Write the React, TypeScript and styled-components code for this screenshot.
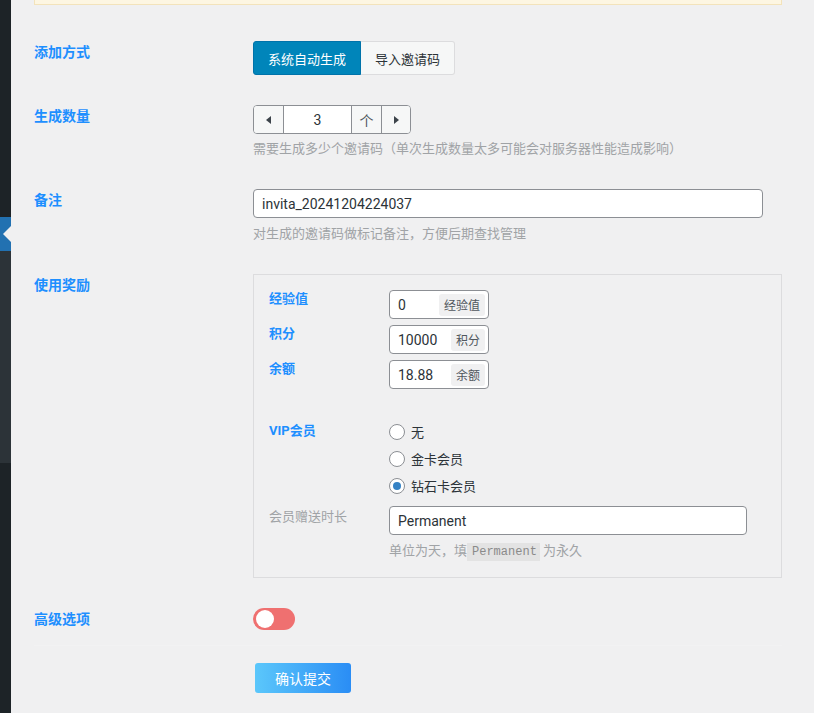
import React from "react";
import styled, { createGlobalStyle } from "styled-components";

const GlobalStyle = createGlobalStyle`
  html, body {
    margin: 0;
    padding: 0;
    background: #f0f0f1;
  }
  body {
    font-family: Roboto, "Noto Sans CJK SC", sans-serif;
    font-size: 13px;
    color: #3c434a;
  }
  * {
    box-sizing: border-box;
  }
`;

const Shell = styled.div`
  display: flex;
  min-height: 100vh;
`;

const Sidebar = styled.div`
  width: 11px;
  flex: none;
  display: flex;
  flex-direction: column;
`;

const MenuSeg = styled.div<{ $color: string; $h?: number; $current?: boolean }>`
  background: ${(p) => p.$color};
  height: ${(p) => (p.$h ? `${p.$h}px` : "auto")};
  flex: ${(p) => (p.$h ? "none" : "1")};
  position: relative;
  ${(p) =>
    p.$current &&
    `
    &::after {
      content: "";
      position: absolute;
      right: 0;
      top: 50%;
      margin-top: -8px;
      border: 8px solid transparent;
      border-right-color: #f0f0f1;
    }
  `}
`;

const Main = styled.div`
  flex: 1;
  padding: 0 32px 0 23px;
`;

const Notice = styled.div`
  height: 5px;
  background: #fdf6e2;
  border: 1px solid #f3e3bb;
  border-top: none;
`;

const FormTable = styled.div`
  margin-top: 21px;
`;

const Row = styled.div<{ $last?: boolean }>`
  display: grid;
  grid-template-columns: 219px 1fr;
  align-items: start;
  padding: 15px 0;
  border-bottom: ${(p) => (p.$last ? "1px solid #f2f2f3" : "none")};
`;

const Label = styled.div`
  margin-top: 1px;
  line-height: 20px;
  font-size: 14px;
  font-weight: 700;
  color: #1e8fff;
`;

const Field = styled.div`
  display: flex;
  flex-direction: column;
  align-items: flex-start;
`;

const Help = styled.p<{ $gap?: number }>`
  margin: ${(p) => p.$gap ?? 6}px 0 0;
  line-height: 20px;
  font-size: 13px;
  color: #a0a3a6;
`;

const Code = styled.code`
  font-family: "Liberation Mono", monospace;
  font-size: 12px;
  color: #8a8a8a;
  background: #e3e3e3;
  padding: 2px 3px 2px 5px;
`;

const ButtonGroup = styled.div`
  display: flex;
`;

const SegButton = styled.button<{ $active?: boolean }>`
  height: 34px;
  padding: 0 14px;
  font-family: inherit;
  font-size: 13px;
  border: 1px solid ${(p) => (p.$active ? "#0073aa" : "#dcdcde")};
  background: ${(p) => (p.$active ? "#0085ba" : "#f6f7f7")};
  color: ${(p) => (p.$active ? "#fff" : "#2c3338")};
  cursor: pointer;
  &:first-child {
    border-radius: 3px 0 0 3px;
  }
  &:last-child {
    border-left: none;
    border-radius: 0 3px 3px 0;
  }
`;

const Stepper = styled.div`
  display: flex;
  height: 29px;
  border: 1px solid #8c8f94;
  border-radius: 4px;
  overflow: hidden;
  background: #fff;
`;

const StepBtn = styled.button<{ $dir: "left" | "right"; $w: number }>`
  width: ${(p) => p.$w}px;
  padding: 0;
  border: none;
  border-right: ${(p) => (p.$dir === "left" ? "1px solid #8c8f94" : "none")};
  background: #f6f7f7;
  display: flex;
  align-items: center;
  justify-content: center;
  cursor: pointer;
  &::before {
    content: "";
    border-top: 4px solid transparent;
    border-bottom: 4px solid transparent;
    ${(p) =>
      p.$dir === "left"
        ? "border-right: 5px solid #3c434a;"
        : "border-left: 5px solid #3c434a;"}
  }
`;

const StepInput = styled.input`
  width: 68px;
  border: none;
  border-right: 1px solid #8c8f94;
  text-align: center;
  font-family: inherit;
  font-size: 14px;
  color: #2c3338;
  outline: none;
`;

const StepUnit = styled.span`
  width: 30px;
  border-right: 1px solid #8c8f94;
  background: #f6f7f7;
  display: flex;
  align-items: center;
  justify-content: center;
  font-size: 14px;
  color: #50575e;
`;

const TextInput = styled.input<{ $w: number }>`
  width: ${(p) => p.$w}px;
  height: 29px;
  padding: 0 8px;
  border: 1px solid #8c8f94;
  border-radius: 4px;
  background: #fff;
  font-family: inherit;
  font-size: 14px;
  color: #2c3338;
  outline: none;
`;

const Panel = styled.div`
  width: 529px;
  border: 1px solid #dcdcde;
  padding: 15px;
`;

const PanelRow = styled.div<{ $mt?: number }>`
  display: grid;
  grid-template-columns: 120px 1fr;
  align-items: start;
  margin-top: ${(p) => p.$mt ?? 0}px;
`;

const SubLabel = styled.div<{ $muted?: boolean; $lh?: number; $mt?: number }>`
  font-size: 13px;
  line-height: ${(p) => p.$lh ?? 18}px;
  margin-top: ${(p) => p.$mt ?? 0}px;
  font-weight: ${(p) => (p.$muted ? 400 : 700)};
  color: ${(p) => (p.$muted ? "#a0a3a6" : "#1e8fff")};
`;

const AddonInput = styled.label`
  width: 100px;
  height: 29px;
  display: flex;
  align-items: center;
  padding: 0 3px 0 8px;
  border: 1px solid #8c8f94;
  border-radius: 4px;
  background: #fff;
  input {
    flex: 1;
    min-width: 0;
    border: none;
    padding: 0;
    outline: none;
    font-family: inherit;
    font-size: 14px;
    color: #2c3338;
  }
`;

const Addon = styled.span`
  height: 22px;
  padding: 0 5px;
  display: flex;
  align-items: center;
  background: #f0f0f1;
  border-radius: 3px;
  font-size: 12px;
  color: #50575e;
`;

const RewardList = styled.div`
  display: flex;
  flex-direction: column;
  gap: 6px;
`;

const RadioList = styled.div`
  display: flex;
  flex-direction: column;
`;

const RadioItem = styled.label`
  height: 27px;
  display: flex;
  align-items: center;
  gap: 6px;
  font-size: 13px;
  color: #2c3338;
`;

const RadioDot = styled.span<{ $checked?: boolean }>`
  width: 16px;
  height: 16px;
  border-radius: 50%;
  border: 1px solid #8c8f94;
  background: #fff;
  display: flex;
  align-items: center;
  justify-content: center;
  &::after {
    content: "";
    width: 8px;
    height: 8px;
    border-radius: 50%;
    background: ${(p) => (p.$checked ? "#3582c4" : "transparent")};
  }
`;

const Toggle = styled.span<{ $on?: boolean }>`
  width: 42px;
  height: 22px;
  border-radius: 11px;
  background: ${(p) => (p.$on ? "#2271b1" : "#ef7070")};
  display: flex;
  align-items: center;
  padding: 0 2px;
  &::after {
    content: "";
    width: 18px;
    height: 18px;
    border-radius: 50%;
    background: #fff;
    margin-left: ${(p) => (p.$on ? "auto" : "1px")};
  }
`;

const SubmitBar = styled.div`
  padding: 17px 0 0 221px;
`;

const SubmitButton = styled.button`
  width: 96px;
  height: 30px;
  border: none;
  border-radius: 3px;
  background: linear-gradient(90deg, #5bc7fb, #2a8df5);
  color: #fff;
  font-family: inherit;
  font-size: 14px;
  cursor: pointer;
`;

const rewards = [
  { name: "经验值", value: "0" },
  { name: "积分", value: "10000" },
  { name: "余额", value: "18.88" },
];

const vipLevels = ["无", "金卡会员", "钻石卡会员"];

const App = () => {
  return (
    <Shell>
      <GlobalStyle />
      <Sidebar>
        <MenuSeg $color="#1d2327" $h={217} />
        <MenuSeg $color="#2271b1" $h={34} $current />
        <MenuSeg $color="#2c3338" $h={212} />
        <MenuSeg $color="#1d2327" />
      </Sidebar>
      <Main>
        <Notice />
        <FormTable>
          <Row>
            <Label>添加方式</Label>
            <Field>
              <ButtonGroup>
                <SegButton $active>系统自动生成</SegButton>
                <SegButton>导入邀请码</SegButton>
              </ButtonGroup>
            </Field>
          </Row>
          <Row>
            <Label>生成数量</Label>
            <Field>
              <Stepper>
                <StepBtn $dir="left" $w={30} />
                <StepInput defaultValue="3" />
                <StepUnit>个</StepUnit>
                <StepBtn $dir="right" $w={28} />
              </Stepper>
              <Help $gap={5}>
                需要生成多少个邀请码（单次生成数量太多可能会对服务器性能造成影响）
              </Help>
            </Field>
          </Row>
          <Row>
            <Label>备注</Label>
            <Field>
              <TextInput $w={510} defaultValue="invita_20241204224037" />
              <Help>对生成的邀请码做标记备注，方便后期查找管理</Help>
            </Field>
          </Row>
          <Row>
            <Label>使用奖励</Label>
            <Field>
              <Panel>
                <RewardList>
                  {rewards.map((r) => (
                    <PanelRow key={r.name}>
                      <SubLabel>{r.name}</SubLabel>
                      <AddonInput>
                        <input defaultValue={r.value} />
                        <Addon>{r.name}</Addon>
                      </AddonInput>
                    </PanelRow>
                  ))}
                </RewardList>
                <PanelRow $mt={29}>
                  <SubLabel $lh={25}>VIP会员</SubLabel>
                  <RadioList>
                    {vipLevels.map((v, i) => (
                      <RadioItem key={v}>
                        <RadioDot $checked={i === 2} />
                        {v}
                      </RadioItem>
                    ))}
                  </RadioList>
                </PanelRow>
                <PanelRow $mt={7}>
                  <SubLabel $muted $mt={2}>
                    会员赠送时长
                  </SubLabel>
                  <Field>
                    <TextInput $w={358} defaultValue="Permanent" />
                    <Help>
                      单位为天，填<Code>Permanent</Code> 为永久
                    </Help>
                  </Field>
                </PanelRow>
              </Panel>
            </Field>
          </Row>
          <Row $last>
            <Label>高级选项</Label>
            <Field>
              <Toggle />
            </Field>
          </Row>
        </FormTable>
        <SubmitBar>
          <SubmitButton>确认提交</SubmitButton>
        </SubmitBar>
      </Main>
    </Shell>
  );
};

export default App;
